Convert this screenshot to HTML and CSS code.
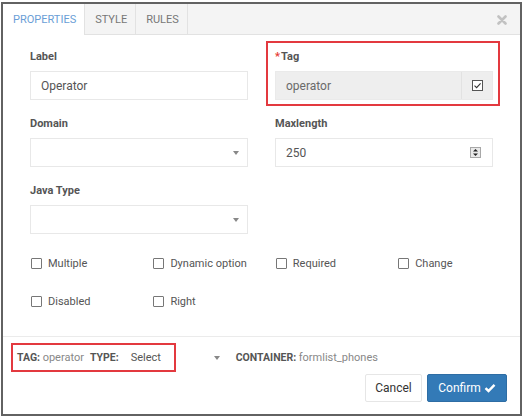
FILE: index.html
```html
<!DOCTYPE html>
<html>
<head>
<meta charset="utf-8">
<link rel="stylesheet" href="styles.css">
</head>
<body>
<div class="dialog">
  <div class="tabbar">
    <div class="tab active">PROPERTIES</div>
    <div class="tab">STYLE</div>
    <div class="tab">RULES</div>
    <div class="close">
      <svg width="10" height="10" viewBox="0 0 10 10"><path d="M1.5 1.5L8.5 8.5M8.5 1.5L1.5 8.5" stroke="#c2c2c2" stroke-width="2.6" stroke-linecap="round"/></svg>
    </div>
  </div>
  <div class="content">
    <div class="form">
      <div class="field">
        <label class="flabel">Label</label>
        <div class="input"><span>Operator</span></div>
      </div>
      <div class="field highlight">
        <label class="flabel"><span class="req">*</span>Tag</label>
        <div class="input disabled">
          <span>operator</span>
          <div class="addon">
            <svg width="11" height="11" viewBox="0 0 11 11"><rect x="0.5" y="0.5" width="10" height="10" fill="#fff" stroke="#555" stroke-width="1"/><path d="M2.5 5.6L4.6 7.6L8.6 3.3" fill="none" stroke="#333" stroke-width="1.1"/></svg>
          </div>
        </div>
      </div>
      <div class="field">
        <label class="flabel">Domain</label>
        <div class="input select"><span></span><i class="caret"></i></div>
      </div>
      <div class="field">
        <label class="flabel">Maxlength</label>
        <div class="input">
          <span>250</span>
          <svg class="spin" width="11" height="11" viewBox="0 0 11 11"><rect x="0.5" y="0.5" width="10" height="10" fill="#e9e9e9" stroke="#a8a8a8"/><path d="M3 4.5L5.5 2L8 4.5Z" fill="#222"/><path d="M3 6.5L5.5 9L8 6.5Z" fill="#222"/></svg>
        </div>
      </div>
      <div class="field">
        <label class="flabel">Java Type</label>
        <div class="input select"><span></span><i class="caret"></i></div>
      </div>
    </div>
    <div class="checks">
      <div class="check"><i class="box"></i>Multiple</div>
      <div class="check"><i class="box"></i>Dynamic option</div>
      <div class="check"><i class="box"></i>Required</div>
      <div class="check"><i class="box"></i>Change</div>
      <div class="check"><i class="box"></i>Disabled</div>
      <div class="check"><i class="box"></i>Right</div>
    </div>
  </div>
  <div class="footer">
    <div class="info">
      <span class="pair tagpair"><b>TAG:</b> <span class="muted">operator</span></span>
      <b>TYPE:</b>
      <span class="typesel">Select</span>
      <i class="caret small"></i>
      <span class="pair container"><b>CONTAINER:</b> <span class="muted">formlist_phones</span></span>
    </div>
    <div class="buttons">
      <button class="btn cancel">Cancel</button>
      <button class="btn confirm">Confirm <svg width="12" height="10" viewBox="0 0 12 10"><path d="M1.5 5.2L4.5 8L10.5 1.8" fill="none" stroke="#fff" stroke-width="2.4"/></svg></button>
    </div>
  </div>
</div>
</body>
</html>
```
FILE: styles.css
```css
html, body {
  margin: 0;
  padding: 0;
  background: #fff;
}
body {
  font-family: Roboto, "Liberation Sans", Arial, sans-serif;
  color: #555;
  width: 524px;
  height: 419px;
  overflow: hidden;
}
.dialog {
  margin: 2px 0 0 1px;
  width: 521px;
  height: 414px;
  box-sizing: border-box;
  border: 2px solid #626262;
  background: #fff;
  display: flex;
  flex-direction: column;
}
.tabbar {
  display: flex;
  height: 31px;
  box-sizing: border-box;
  background: #f4f4f4;
  border-bottom: 1px solid #e2e2e2;
}
.tab {
  display: flex;
  align-items: center;
  padding: 0 8px 0 10px;
  font-size: 11px;
  color: #777;
  border-right: 1px solid #e2e2e2;
}
.tab.active {
  background: #fff;
  color: #6a9ed6;
  height: 31px;
  box-sizing: border-box;
}
.close {
  margin-left: auto;
  margin-right: 13px;
  display: flex;
  align-items: center;
  padding-top: 2px;
}
.content {
  padding: 14px 0 0 27px;
  height: 302px;
  box-sizing: border-box;
  border-bottom: 1px solid #ebebeb;
}
.form {
  display: grid;
  grid-template-columns: 218px 218px;
  column-gap: 27px;
  row-gap: 16px;
}
.field {
  position: relative;
}
.flabel {
  display: block;
  font-size: 11px;
  font-weight: bold;
  line-height: 16px;
  margin-bottom: 6px;
  color: #555;
}
.req {
  color: #e53935;
  margin-right: 1px;
}
.highlight::after {
  content: "";
  position: absolute;
  left: -9px;
  right: -7px;
  top: -8px;
  bottom: -6px;
  border: 2px solid #e3393f;
}
.input {
  height: 29px;
  box-sizing: border-box;
  border: 1px solid #e8e8e8;
  padding: 0 0 0 10px;
  font-size: 12px;
  color: #555;
  display: flex;
  align-items: center;
}
.input span {
  flex: 1;
}
.input.disabled {
  background: #eeeeee;
  border-color: #eaeaea;
  color: #6a6a6a;
  padding-right: 0;
}
.addon {
  width: 31px;
  height: 27px;
  box-sizing: border-box;
  border-left: 1px solid #e2e2e2;
  display: flex;
  align-items: center;
  justify-content: center;
}
.spin {
  margin-right: 11px;
}
.caret {
  width: 0;
  height: 0;
  border-left: 3.5px solid transparent;
  border-right: 3.5px solid transparent;
  border-top: 4px solid #888;
  margin-right: 8px;
}
.checks {
  display: grid;
  grid-template-columns: repeat(4, 122.4px);
  grid-auto-rows: 20px;
  row-gap: 18px;
  margin: 19px 0 0 1px;
}
.check {
  display: flex;
  align-items: center;
  font-size: 11px;
  color: #555;
}
.box {
  width: 11px;
  height: 11px;
  box-sizing: border-box;
  border: 1px solid #777;
  border-radius: 1px;
  margin-right: 6px;
}
.footer {
  padding: 6px 13px 11px 14px;
  display: flex;
  flex-direction: column;
}
.info {
  position: relative;
  height: 29px;
  display: flex;
  align-items: center;
  font-size: 10.5px;
  color: #555;
}
.info::after {
  content: "";
  position: absolute;
  left: -6px;
  top: 0;
  width: 165px;
  height: 29px;
  box-sizing: border-box;
  border: 2px solid #e3393f;
}
.info b {
  font-weight: bold;
  color: #555;
}
.muted {
  color: #888;
  font-size: 11px;
}
.tagpair {
  margin-right: 6px;
}
.typesel {
  margin-left: 12px;
  width: 83px;
  font-size: 11px;
  color: #555;
}
.caret.small {
  margin-right: 16px;
}
.buttons {
  display: flex;
  justify-content: flex-end;
  gap: 5px;
  margin-top: 2px;
}
.btn {
  height: 28px;
  box-sizing: border-box;
  border-radius: 2px;
  font-family: Roboto, "Liberation Sans", Arial, sans-serif;
  font-size: 12px;
  padding: 0;
  display: flex;
  align-items: center;
  justify-content: center;
}
.cancel {
  width: 57px;
  background: #fff;
  border: 1px solid #e6e6e6;
  color: #333;
}
.confirm {
  width: 80px;
  background: #337ab7;
  border: 1px solid #2e6da4;
  color: #fff;
  gap: 3px;
}
```
